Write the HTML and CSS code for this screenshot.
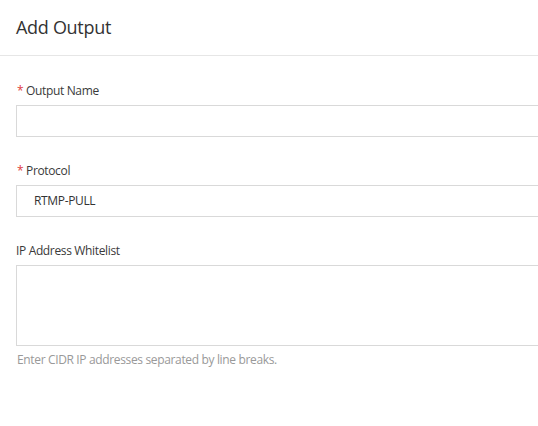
FILE: index.html
```html
<!DOCTYPE html>
<html>
<head>
<meta charset="utf-8">
<link rel="stylesheet" href="styles.css">
</head>
<body>
<div class="panel">
  <div class="header"><h1 class="title">Add Output</h1></div>
  <form class="form">
    <div class="item">
      <label class="label"><span class="req">*</span> Output Name</label>
      <div class="input"></div>
    </div>
    <div class="item">
      <label class="label"><span class="req">*</span> Protocol</label>
      <div class="input select">RTMP-PULL</div>
    </div>
    <div class="item">
      <label class="label">IP Address Whitelist</label>
      <div class="input area"></div>
      <div class="help">Enter CIDR IP addresses separated by line breaks.</div>
    </div>
  </form>
</div>
</body>
</html>
```
FILE: styles.css
```css
html, body {
  margin: 0;
  padding: 0;
  background: #fff;
  overflow: hidden;
}
body {
  font-family: "Open Sans", "Noto Sans", sans-serif;
  color: #333;
  width: 538px;
  height: 426px;
}
.panel {
  width: 538px;
}
.header {
  height: 55px;
  border-bottom: 1px solid #e6e6e6;
  padding: 0 16px;
  display: flex;
  align-items: center;
}
.title {
  margin: 0;
  font-size: 18px;
  font-weight: 400;
  line-height: 24px;
  color: #333;
  letter-spacing: -0.3px;
  position: relative;
  top: -1px;
}
.form {
  padding: 26px 0 0 16px;
}
.item {
  margin-bottom: 25px;
}
.label {
  display: block;
  font-size: 12px;
  line-height: 18px;
  height: 18px;
  margin-bottom: 5px;
  color: #3a3a3a;
  letter-spacing: -0.35px;
}
.req {
  color: #e0403c;
  margin-left: 1px;
}
.input {
  box-sizing: border-box;
  height: 32px;
  border: 1px solid #d9d9d9;
  border-right: 0;
  background: #fff;
  font-size: 12px;
  line-height: 30px;
  padding-left: 17px;
  color: #333;
  letter-spacing: -0.35px;
}
.area {
  height: 81px;
}
.help {
  margin-top: 5px;
  font-size: 12px;
  line-height: 18px;
  color: #999;
  letter-spacing: -0.35px;
  margin-left: 1px;
}
```
